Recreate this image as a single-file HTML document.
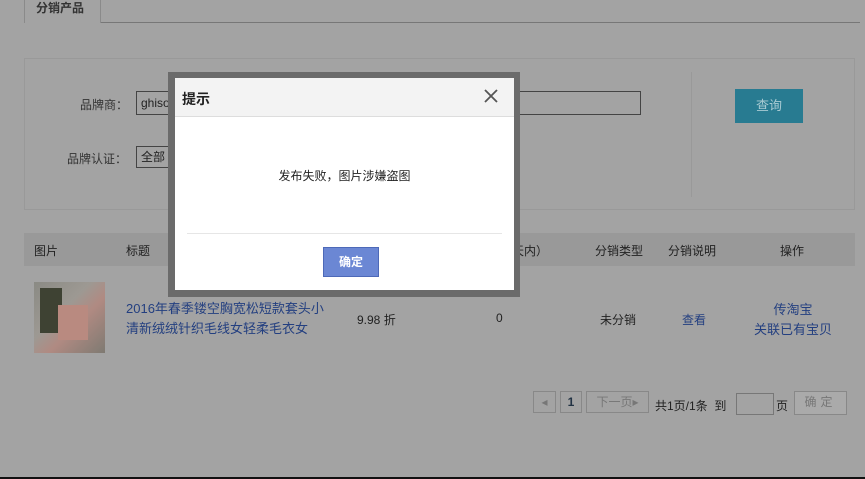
<!DOCTYPE html><html><head><meta charset="utf-8"><style>
body{margin:0;width:865px;height:479px;background:#a3a3a3;font-family:"Liberation Sans","Noto Sans CJK SC",sans-serif;font-size:12px;color:#222;position:relative;overflow:hidden}
.a{position:absolute}
.lnk{color:#233f80}
.pg{position:absolute;top:391px;height:22px;border:1px solid #888;box-sizing:border-box;line-height:20px;text-align:center;color:#777}
</style></head><body>
<div class="a" style="left:24px;top:-1px;width:77px;height:24px;border:1px solid #8a8a8a;border-bottom:none;box-sizing:border-box;line-height:17px;font-weight:bold;color:#333;padding-left:11px;background:#a3a3a3;z-index:2">分销产品</div>
<div class="a" style="left:24px;top:22px;width:836px;height:1px;background:#777"></div>
<div class="a" style="left:24px;top:58px;width:831px;height:152px;border:1px solid #999;box-sizing:border-box"></div>
<div class="a" style="left:691px;top:72px;width:1px;height:125px;background:#999"></div>
<div class="a" style="left:80px;top:96px;color:#333">品牌商：</div>
<div class="a" style="left:136px;top:91px;width:505px;height:24px;border:1px solid #444;box-sizing:border-box;padding-left:4px;line-height:22px">ghiso</div>
<div class="a" style="left:67px;top:150px;color:#333">品牌认证：</div>
<div class="a" style="left:136px;top:146px;width:60px;height:22px;border:1px solid #444;box-sizing:border-box;padding-left:4px;line-height:20px">全部</div>
<div class="a" style="left:735px;top:89px;width:68px;height:34px;background:#287b91;color:#a9cbd3;text-align:center;line-height:34px;font-size:13px">查询</div>
<div class="a" style="left:24px;top:233px;width:831px;height:33px;background:#999"></div>
<div class="a" style="left:34px;top:242px">图片</div>
<div class="a" style="left:126px;top:242px">标题</div>
<div class="a" style="left:512px;top:242px">天内）</div>
<div class="a" style="left:595px;top:242px">分销类型</div>
<div class="a" style="left:668px;top:242px">分销说明</div>
<div class="a" style="left:780px;top:242px">操作</div>
<div class="a" style="left:34px;top:282px;width:71px;height:71px;background:linear-gradient(135deg,#8a8a84 0%,#9d9993 40%,#b08a82 60%,#7e7a72 100%)"></div>
<div class="a" style="left:40px;top:288px;width:22px;height:45px;background:#3e4233"></div>
<div class="a" style="left:58px;top:305px;width:30px;height:35px;background:#b98a80"></div>
<div class="a lnk" style="left:126px;top:299px;line-height:20px;font-size:13px">2016年春季镂空胸宽松短款套头小<br>清新绒绒针织毛线女轻柔毛衣女</div>
<div class="a" style="left:357px;top:311px">9.98 折</div>
<div class="a" style="left:496px;top:311px">0</div>
<div class="a" style="left:600px;top:311px">未分销</div>
<div class="a lnk" style="left:682px;top:311px">查看</div>
<div class="a lnk" style="left:752px;top:300px;width:82px;text-align:center;line-height:20px;font-size:13px">传淘宝<br>关联已有宝贝</div>
<div class="pg" style="left:533px;width:23px">◂</div>
<div class="pg" style="left:560px;width:22px;color:#234;font-weight:bold">1</div>
<div class="pg" style="left:586px;width:63px">下一页▸</div>
<div class="a" style="left:655px;top:397px">共1页/1条&nbsp; 到</div>
<div class="a" style="left:736px;top:393px;width:38px;height:22px;border:1px solid #777;box-sizing:border-box"></div>
<div class="a" style="left:776px;top:397px">页</div>
<div class="pg" style="left:794px;width:53px;height:24px;top:391px;background:#aaa;letter-spacing:4px">确定</div>
<div class="a" style="left:0;top:477px;width:865px;height:2px;background:#111"></div>

<div class="a" style="left:168px;top:72px;width:352px;height:225px;background:#6b6b6b"></div>
<div class="a" style="left:175px;top:78px;width:339px;height:212px;background:#fff"></div>
<div class="a" style="left:175px;top:78px;width:339px;height:39px;background:#f3f3f3;border-bottom:1px solid #ddd;box-sizing:border-box"></div>
<div class="a" style="left:182px;top:89px;font-size:14px;color:#222;font-weight:bold">提示</div>
<svg class="a" style="left:484px;top:89px" width="14" height="14"><path d="M1 1L13 13M13 1L1 13" stroke="#555" stroke-width="1.8"/></svg>
<div class="a" style="left:175px;top:167px;width:339px;text-align:center;color:#222">发布失败，图片涉嫌盗图</div>
<div class="a" style="left:187px;top:233px;width:315px;height:1px;background:#e6e6e6"></div>
<div class="a" style="left:323px;top:247px;width:56px;height:30px;background:#6b87d4;border:1px solid #4d69b8;box-sizing:border-box;color:#fff;font-weight:bold;text-align:center;line-height:28px">确定</div>
</body></html>
